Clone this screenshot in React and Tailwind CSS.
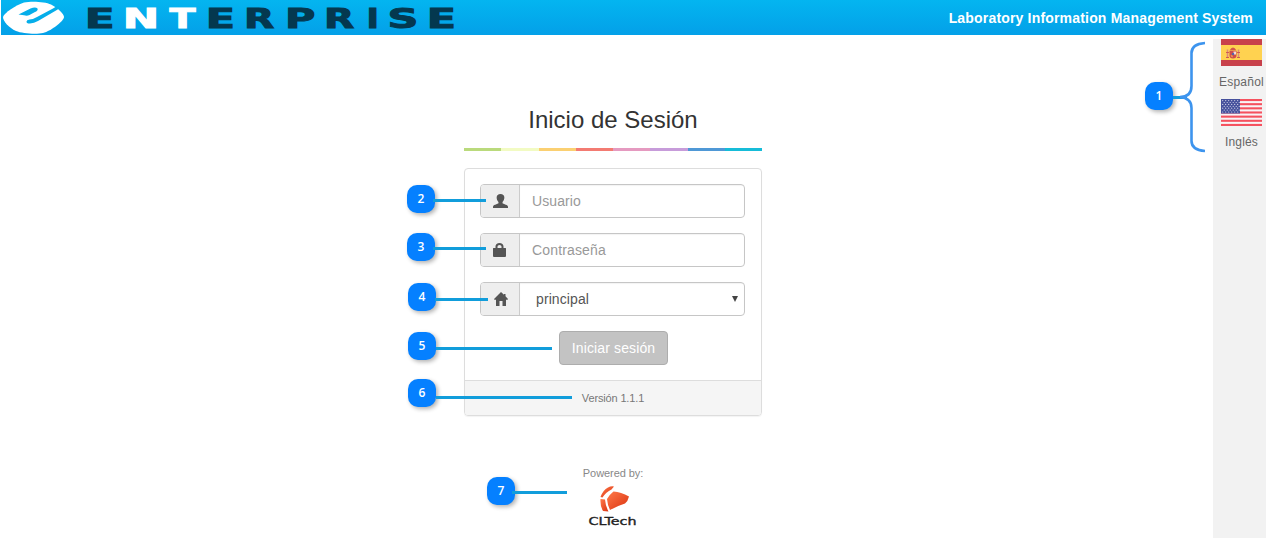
import React from "react";

const LETTERS = [
  { c: "E", left: 88, width: 25, lsb: 0.092, ink: 0.535, fill: "#04384f" },
  { c: "N", left: 126, width: 30, lsb: 0.092, ink: 0.653, fill: "#ffffff" },
  { c: "T", left: 169, width: 27, lsb: 0.005, ink: 0.672, fill: "#ffffff" },
  { c: "E", left: 209, width: 24.5, lsb: 0.092, ink: 0.535, fill: "#04384f" },
  { c: "R", left: 247, width: 28, lsb: 0.092, ink: 0.676, fill: "#04384f" },
  { c: "P", left: 288, width: 26, lsb: 0.092, ink: 0.592, fill: "#04384f" },
  { c: "R", left: 327, width: 28, lsb: 0.092, ink: 0.676, fill: "#04384f" },
  { c: "I", left: 369, width: 7.5, lsb: 0.092, ink: 0.188, fill: "#04384f" },
  { c: "S", left: 389.5, width: 27, lsb: 0.066, ink: 0.592, fill: "#04384f" },
  { c: "E", left: 430, width: 24.5, lsb: 0.092, ink: 0.535, fill: "#04384f" },
];

function Brand() {
  const size = 27.4;
  const stroke = 1;
  return (
    <svg width="460" height="35" viewBox="1 0 460 35" aria-label="Enterprise">
      <path d="M3 17C4 13 16 5 24 2.500C31 1 45 1.500 51 4.500C58 8 64 14 64 17C64 21 51 31 43 33C36 34.500 22 33.500 16 31C9 28 3 21 3 17Z" fill="#fff" />
      <path d="M18.500 14.500L30.500 8.500Q35.500 6.500 37.500 8.500Q38.500 10.500 34.500 12.300L29.500 15Q27 16.200 24 15.300Z" fill="#05aeea" />
      <path d="M57 6L53 8.500L37 17Q32.500 19.500 29.500 19.500Q26.500 19.800 26.500 21.500Q26.500 23.700 30 23.500Q34 23.200 38 21L56 10.500L60 8Z" fill="#05aeea" />
      {LETTERS.map((l, i) => {
        const sx = l.width / (l.ink * size + stroke);
        const x = l.left - (l.lsb * size - stroke / 2) * sx;
        return (
          <text key={i} transform={`translate(${x} 28.400) scale(${sx} 1)`} fill={l.fill} stroke={l.fill} strokeWidth={stroke} fontSize={size} fontWeight="700" fontFamily="DejaVu Sans, sans-serif">
            {l.c}
          </text>
        );
      })}
    </svg>
  );
}

function SpainFlag() {
  return (
    <svg width="41" height="27" viewBox="0 0 41 27" className="block">
      <rect width="41" height="27" fill="#c8414b" />
      <rect y="6" width="41" height="15" fill="#ffd250" />
      <path d="M6.500 10.500v8M17.500 10.500v8" stroke="#dd8a78" strokeWidth="1.500" />
      <path d="M5 18.500h3M16 18.500h3M5 13.500h3M16 13.500h3" stroke="#cf5a50" />
      <path d="M8.500 12h7v4.500a3.500 3 0 0 1-7 0z" fill="#cf4b4b" />
      <path d="M8.500 11.500q3.500-6 7 0z" fill="#d2554b" />
      <path d="M12.500 12.500h2.500v3h-2.500z" fill="#f3dcd8" />
      <circle cx="12" cy="15" r="1.200" fill="#5064aa" />
      <path d="M9.500 16.500h2v2z" fill="#ffd250" />
    </svg>
  );
}

function UsaFlag() {
  const stars = [];
  for (let r = 0; r < 7; r++)
    for (let c = 0; c < 6; c++)
      stars.push(<circle key={`${r}-${c}`} cx={1.7 + c * 3 + (r % 2) * 1.5} cy={1.6 + r * 1.9} r="0.6" fill="#d8daec" />);
  return (
    <svg width="41" height="27" viewBox="0 0 41 27" className="block">
      <rect width="41" height="27" fill="#f8f4f6" />
      {[0, 1, 2, 3, 4, 5, 6].map((i) => (
        <rect key={i} y={i * 4.15} width="41" height="2.080" fill="#f5515e" />
      ))}
      <rect width="19" height="14.500" fill="#46509c" />
      {stars}
    </svg>
  );
}

const UserIcon = () => (
  <svg width="15" height="14" viewBox="0 0 14 14" preserveAspectRatio="none" fill="#555">
    <path d="M7 0C9.200 0 10.600 1.300 10.600 3.500C10.600 5.200 9.900 7 8.900 8V9.200C9.500 10 13 10.500 13.800 12Q14.100 12.800 14 14H0Q-.1 12.800 .2 12C1 10.500 4.500 10 5.100 9.200V8C4.100 7 3.400 5.200 3.400 3.500C3.400 1.300 4.800 0 7 0Z" />
  </svg>
);
const LockIcon = () => (
  <svg width="14" height="14" viewBox="0 0 14 14" fill="#555">
    <path fillRule="evenodd" d="M2.500 5V3.500C2.500 1.200 4.200 0 6.500 0S10.500 1.200 10.500 3.500V5H12.500Q13 5 13 5.500V13Q13 14 12 14H1Q0 14 0 13V5.500Q0 5 .5 5ZM4.500 5H8.500V3.500Q8.500 2 6.500 2T4.500 3.500Z" />
  </svg>
);
const HomeIcon = () => (
  <svg width="14" height="14" viewBox="0 0 14 14" className="ml-px" fill="#555">
    <path d="M7 0L10 2.800V2H11.500V4.300L14 7Q14 7.800 13.300 7.800H12V13.500Q12 14 11.500 14H8.500V9H5.500V14H2.500Q2 14 2 13.500V7.800H.7Q0 7.800 0 7Z" />
  </svg>
);

function Field({ icon, children }) {
  return (
    <div className="flex h-[34px] w-[265px] overflow-hidden rounded border border-[#c6c6c6] bg-white text-sm">
      <div className="flex w-[39px] shrink-0 items-center justify-center border-r border-[#ccc] bg-[#eee]">{icon}</div>
      <div className="flex flex-1 items-center shadow-[inset_0_1px_1px_rgba(0,0,0,0.05)]">{children}</div>
    </div>
  );
}

const RAINBOW = ["bg-[#bada7c]", "bg-[#f2fbc3]", "bg-[#fbd072]", "bg-[#f37b72]", "bg-[#e59ac0]", "bg-[#c79cda]", "bg-[#4f98d6]", "bg-[#16bcd8]"];

function Callout({ n, box, line }) {
  return (
    <>
      <div className={`absolute flex size-7 items-center justify-center rounded-[10px] bg-[#0580ff] font-['Open_Sans',sans-serif] text-xs font-semibold text-white shadow-[2px_2px_4px_rgba(0,0,0,0.3)] ${box}`}>
        {n}
      </div>
      <div className={`absolute h-[3px] bg-[#119ddb] ${line}`} />
    </>
  );
}

function CLTechLogo() {
  return (
    <svg width="50" height="42" viewBox="588 485 50 42" className="block">
      <defs>
        <linearGradient id="flame" x1="0" y1="0" x2="1" y2="1">
          <stop offset="0" stopColor="#ff7a4a" />
          <stop offset="1" stopColor="#da3210" />
        </linearGradient>
      </defs>
      <path d="M600.500 497Q603 490 608 487.500Q611 485.800 614 486.500L611.500 489.500Q606 492 602.500 497.500Z" fill="url(#flame)" />
      <path d="M600.500 499L605 499.500Q605.500 506 608.500 511.500L603 511Q600 506 600.500 499Z" fill="url(#flame)" />
      <path d="M613.500 491.500Q621 492 629 496.500Q628 501 625 503.500Q617 506 610 510Q607.500 505 607 499Q609 495 613.500 491.500Z" fill="url(#flame)" />
      <text x="588.500" y="524.500" fontFamily="DejaVu Sans, sans-serif" fontSize="10.500" stroke="#222" strokeWidth=".35" fill="#222" textLength="48" lengthAdjust="spacingAndGlyphs">CLTech</text>
    </svg>
  );
}

export default function App() {
  return (
    <div className="relative flex h-[538px] w-[1266px] flex-col overflow-hidden bg-white font-['Liberation_Sans',Arial,sans-serif] text-[#555]">
      <header className="ml-px flex h-[35px] shrink-0 items-center justify-between bg-linear-to-b from-[#04b5f0] to-[#04a0e8] pr-[13px]">
        <Brand />
        <span className="text-sm leading-5 font-bold tracking-[0.18px] whitespace-nowrap text-white">Laboratory Information Management System</span>
      </header>

      <div className="flex flex-1">
        <main className="flex flex-1 flex-col items-center pt-[69px] pl-[13px]">
          <h1 className="h-8 text-2xl leading-8 text-[#333]">Inicio de Sesión</h1>
          <div className="mt-3 flex h-[3px] w-[298px]">
            {RAINBOW.map((c) => (
              <div key={c} className={`flex-1 ${c}`} />
            ))}
          </div>
          <section className="mt-[17px] flex h-[248px] w-[298px] flex-col overflow-hidden rounded border border-[#ddd] shadow-[0_1px_1px_rgba(0,0,0,0.05)]">
            <div className="flex flex-1 flex-col gap-[15px] pt-[15px] pl-[15px]">
              <Field icon={<UserIcon />}>
                <span className="pl-3 tracking-[0.1px] text-[#999]">Usuario</span>
              </Field>
              <Field icon={<LockIcon />}>
                <span className="pl-3 tracking-[0.15px] text-[#999]">Contraseña</span>
              </Field>
              <Field icon={<HomeIcon />}>
                <span className="flex-1 pl-4 tracking-[0.1px]">principal</span>
                <svg width="6" height="6" viewBox="0 0 6 6" className="mr-[6px]">
                  <path d="M0 0H6L3 6Z" fill="#444" />
                </svg>
              </Field>
              <button className="ml-[79px] h-[34px] w-[109px] rounded border border-[#adadad] bg-[#c3c3c3] text-sm tracking-[0.13px] text-white">Iniciar sesión</button>
            </div>
            <footer className="flex h-[35px] items-center justify-center border-t border-[#ddd] bg-[#f5f5f5] text-[11px] tracking-[-0.15px] text-[#777]">Versión 1.1.1</footer>
          </section>
          <div className="mt-[49px] text-[11px] leading-4 tracking-[-0.08px] text-[#888]">Powered by:</div>
          <div className="mt-1">
            <CLTechLogo />
          </div>
        </main>
        <aside className="mt-1 flex w-[53px] shrink-0 flex-col bg-[#f2f2f2] text-xs text-[#666]">
          <div className="flex h-[60px] flex-col pl-2">
            <SpainFlag />
            <span className="mt-2 -ml-0.5 leading-4 tracking-[0.22px]">Español</span>
          </div>
          <div className="flex h-[60px] flex-col pl-2">
            <UsaFlag />
            <span className="mt-2 ml-1 leading-4 tracking-[0.15px]">Inglés</span>
          </div>
        </aside>
      </div>

      <Callout n="1" box="left-[1145px] top-[82px]" line="left-[1173px] top-[96px] w-[14px]" />
      <svg width="34" height="112" viewBox="0 0 34 112" className="absolute top-[41px] left-[1173px]">
        <path d="M32 2Q18.500 3 18.500 12V45Q18.500 56 7 56Q18.500 57 18.500 67V100Q18.500 109 32 110" fill="none" stroke="#3d94ee" strokeWidth="2.600" />
      </svg>
      <Callout n="2" box="left-[407px] top-[185px]" line="left-[433px] top-[199px] w-[53px]" />
      <Callout n="3" box="left-[407px] top-[233px]" line="left-[433px] top-[247px] w-[53px]" />
      <Callout n="4" box="left-[408px] top-[283px]" line="left-[435px] top-[298px] w-[53px]" />
      <Callout n="5" box="left-[408px] top-[332px]" line="left-[436px] top-[347px] w-[116px]" />
      <Callout n="6" box="left-[408px] top-[379px]" line="left-[436px] top-[396px] w-[136px]" />
      <Callout n="7" box="left-[487px] top-[477px]" line="left-[512px] top-[491px] w-[55px]" />
    </div>
  );
}
